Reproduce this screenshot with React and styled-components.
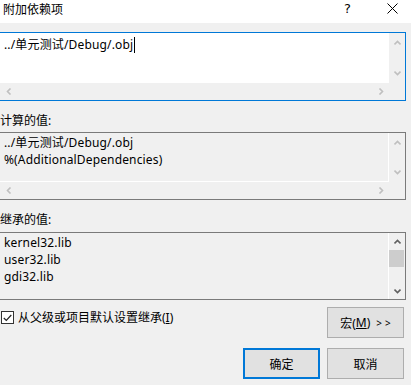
import React from 'react';
import styled, { createGlobalStyle } from 'styled-components';

const Global = createGlobalStyle`
  html, body { margin: 0; padding: 0; }
  body {
    width: 411px; height: 385px; overflow: hidden;
    background: #f0f0f0;
    font-family: "Noto Sans", "Noto Sans CJK SC", sans-serif;
    font-size: 12px; color: #000;
  }
`;

const Dialog = styled.div`
  display: flex; flex-direction: column;
  width: 411px; height: 385px;
`;

const TitleBar = styled.div`
  height: 23px; background: #fff;
  display: flex; align-items: flex-start;
  padding-left: 3px;
`;

const Title = styled.div`
  flex: 1; line-height: 20px; font-size: 12px;
`;

const TitleButton = styled.div`
  width: ${p => p.$w}px; height: 17px;
  display: flex; align-items: center; justify-content: center;
  font-family: "DejaVu Sans", sans-serif; font-size: 13px; color: #000;
`;

const Body = styled.div`
  display: flex; flex-direction: column;
  margin-left: -1px; width: 407px;
  padding-top: 9px;
`;

const Label = styled.div`
  line-height: 17px; margin: 11px 0 ${p => p.$mb}px 1px;
`;

const Box = styled.div`
  box-sizing: border-box;
  height: ${p => p.$h}px;
  border: 1px solid ${p => (p.$focus ? '#0078d7' : '#7a7a7a')};
  display: grid;
  grid-template-columns: 1fr 16px;
  grid-template-rows: ${p => (p.$hscroll ? '1fr 17px' : '1fr')};
  background: #f0f0f0;
`;

const Content = styled.div`
  background: ${p => (p.$editable ? '#fff' : '#f0f0f0')};
  ${p => (p.$editable ? '' : 'border-right: 1px solid #fff;')}
  ${p => (p.$editable || !p.$hscroll ? '' : 'border-bottom: 1px solid #fff;')}
  padding: ${p => p.$pt}px 4px 0 4px;
  line-height: 17px;
  letter-spacing: 0.15px;
  white-space: pre;
  overflow: hidden;
`;

const Caret = styled.span`
  display: inline-block; width: 1px; height: 16px;
  background: #000; vertical-align: -4px; margin-left: 1px;
`;

const VScroll = styled.div`
  display: flex; flex-direction: column;
`;

const ArrowCell = styled.div`
  height: ${p => p.$h}px; flex: none;
  display: flex; align-items: center; justify-content: center;
`;

const Track = styled.div`
  flex: 1;
`;

const Thumb = styled.div`
  width: 15px; height: 17px; background: #cdcdcd;
`;

const HScroll = styled.div`
  display: flex; justify-content: space-between;
`;

const HCell = styled.div`
  width: 17px; display: flex; align-items: center; justify-content: center;
`;

const Footer = styled.div`
  display: flex; justify-content: space-between; align-items: flex-start;
  margin-top: 7px; padding-right: 2px;
`;

const CheckLabel = styled.label`
  display: flex; align-items: center; gap: 4px;
  padding: 2px 0 0 2px; line-height: 17px;
`;

const CheckBox = styled.span`
  box-sizing: border-box; width: 13px; height: 13px;
  border: 1px solid #333; background: #fff;
  display: flex; align-items: center; justify-content: center;
`;

const Buttons = styled.div`
  display: flex; justify-content: flex-end; gap: 7px;
  margin-top: 10px; padding-right: 2px;
`;

const Button = styled.button`
  box-sizing: border-box;
  width: 77px; height: 31px;
  background: #e1e1e1;
  border: ${p => (p.$default ? '2px solid #0078d7' : '1px solid #adadad')};
  font-family: "Noto Sans", "Noto Sans CJK SC", sans-serif;
  font-size: 12px; color: #000; padding: 0;
  display: flex; align-items: center; justify-content: center;
`;

const Chev = styled.span`
  font-size: 10px; letter-spacing: 3px; margin-left: 6px; margin-right: -3px;
`;

const U = styled.span`
  text-decoration: underline;
`;

const Arrow = ({ dir, color }) => {
  const d = {
    up: 'M0.5 4.5 L3.5 1.5 L6.5 4.5',
    down: 'M0.5 1.5 L3.5 4.5 L6.5 1.5',
    left: 'M4.5 0.5 L1.5 3.5 L4.5 6.5',
    right: 'M1.5 0.5 L4.5 3.5 L1.5 6.5',
  }[dir];
  const horiz = dir === 'left' || dir === 'right';
  return (
    <svg width={horiz ? 6 : 7} height={horiz ? 7 : 6} viewBox={horiz ? '0 0 6 7' : '0 0 7 6'}>
      <path d={d} fill="none" stroke={color} strokeWidth="1.6" />
    </svg>
  );
};

const DIS = '#bfbfbf';
const EN = '#606060';

function TextBox({ h, focus, editable, hscroll, pt, cell, thumb, children }) {
  const color = thumb ? EN : DIS;
  return (
    <Box $h={h} $focus={focus} $hscroll={hscroll}>
      <Content $editable={editable} $hscroll={hscroll} $pt={pt}>{children}</Content>
      <VScroll>
        <ArrowCell $h={cell}><Arrow dir="up" color={color} /></ArrowCell>
        <Track>{thumb && <Thumb />}</Track>
        <ArrowCell $h={cell}><Arrow dir="down" color={color} /></ArrowCell>
      </VScroll>
      {hscroll && (
        <>
          <HScroll>
            <HCell><Arrow dir="left" color={DIS} /></HCell>
            <HCell><Arrow dir="right" color={DIS} /></HCell>
          </HScroll>
          <div />
        </>
      )}
    </Box>
  );
}

export default function App() {
  return (
    <>
      <Global />
      <Dialog>
        <TitleBar>
          <Title>附加依赖项</Title>
          <TitleButton $w={51}>?</TitleButton>
          <TitleButton $w={38}>
            <svg width="11" height="11" viewBox="0 0 11 11">
              <path d="M0.5 0.5 L10.5 10.5 M10.5 0.5 L0.5 10.5" stroke="#000" strokeWidth="1" fill="none" />
            </svg>
          </TitleButton>
        </TitleBar>
        <Body>
          <TextBox h={69} focus editable hscroll pt={3} cell={20}>
            ../单元测试/Debug/.obj<Caret />
          </TextBox>
          <Label $mb={3}>计算的值:</Label>
          <TextBox h={68} hscroll pt={1} cell={20}>
            {'../单元测试/Debug/.obj\n%(AdditionalDependencies)'}
          </TextBox>
          <Label $mb={4}>继承的值:</Label>
          <TextBox h={68} pt={1} cell={17} thumb>
            {'kernel32.lib\nuser32.lib\ngdi32.lib'}
          </TextBox>
          <Footer>
            <CheckLabel>
              <CheckBox>
                <svg width="9" height="8" viewBox="0 0 9 8">
                  <path d="M0.8 4 L3.3 6.5 L8.3 1" fill="none" stroke="#222" strokeWidth="1.2" />
                </svg>
              </CheckBox>
              <span>从父级或项目默认设置继承(<U>I</U>)</span>
            </CheckLabel>
            <Button>宏(<U>M</U>)<Chev>&gt;&gt;</Chev></Button>
          </Footer>
          <Buttons>
            <Button $default>确定</Button>
            <Button>取消</Button>
          </Buttons>
        </Body>
      </Dialog>
    </>
  );
}
